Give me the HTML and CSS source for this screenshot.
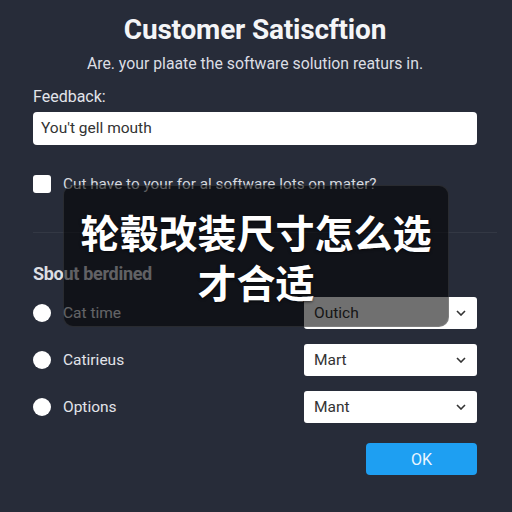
FILE: index.html
```html
<!DOCTYPE html>
<html lang="en">

<head>
    <meta charset="UTF-8">
    <meta name="viewport" content="width=device-width, initial-scale=1.0">
    <title>Customer Satisfaction</title>
    <link rel="stylesheet" href="styles.css">
</head>

<body>
    <div class="survey">
        <h1>Customer Satiscftion</h1>
        <p class="subtitle">Are. your plaate the software solution reaturs in.</p>

        <label class="field-label" for="feedback">Feedback:</label>
        <div class="text-input" id="feedback">You't gell mouth</div>

        <div class="check-row">
            <span class="checkbox"></span>
            <span class="check-text">Cut have to your for al software lots on mater?</span>
        </div>

        <div class="divider"></div>

        <h2>Sbout berdined</h2>

        <div class="option-list">
            <div class="option-row">
                <div class="option-label">
                    <span class="radio"></span>
                    <span>Cat time</span>
                </div>
                <div class="select">
                    <span>Outich</span>
                    <svg class="chevron" viewBox="0 0 10 6" width="10" height="6">
                        <path d="M1 1 L5 5 L9 1" fill="none" stroke="#333" stroke-width="1.6" />
                    </svg>
                </div>
            </div>
            <div class="option-row">
                <div class="option-label">
                    <span class="radio"></span>
                    <span>Catirieus</span>
                </div>
                <div class="select">
                    <span>Mart</span>
                    <svg class="chevron" viewBox="0 0 10 6" width="10" height="6">
                        <path d="M1 1 L5 5 L9 1" fill="none" stroke="#333" stroke-width="1.6" />
                    </svg>
                </div>
            </div>
            <div class="option-row">
                <div class="option-label">
                    <span class="radio"></span>
                    <span>Options</span>
                </div>
                <div class="select">
                    <span>Mant</span>
                    <svg class="chevron" viewBox="0 0 10 6" width="10" height="6">
                        <path d="M1 1 L5 5 L9 1" fill="none" stroke="#333" stroke-width="1.6" />
                    </svg>
                </div>
            </div>
        </div>

        <div class="actions">
            <button type="button">OK</button>
        </div>
    </div>

    <!-- caption over the form -->
    <div class="caption">
        <p>轮毂改装尺寸怎么选<br>才合适</p>
    </div>
</body>

</html>
```

FILE: styles.css
```css
body {
    font-family: 'Roboto', 'Noto Sans', sans-serif;
    background: #272c39;
    margin: 0;
    padding: 0;
    width: 512px;
    height: 512px;
    overflow: hidden;
    position: relative;
    color: #e6e8ed;
}

.survey {
    padding: 14px 35px 0 33px;
}

h1 {
    margin: 0;
    font-size: 28px;
    line-height: 32px;
    font-weight: 700;
    color: #f4f5f7;
    text-align: center;
    letter-spacing: -0.2px;
}

.subtitle {
    margin: 8px 0 0;
    font-size: 15.8px;
    line-height: 20px;
    color: #dcdee4;
    text-align: center;
}

.field-label {
    display: block;
    margin-top: 13px;
    font-size: 16px;
    line-height: 20px;
    color: #e2e4ea;
}

.text-input {
    margin-top: 5px;
    height: 33px;
    box-sizing: border-box;
    padding: 0 8px;
    background: #fff;
    border-radius: 4px;
    font-size: 15.5px;
    line-height: 33px;
    color: #333;
}

.check-row {
    display: flex;
    align-items: center;
    gap: 12px;
    margin-top: 29px;
    height: 20px;
}

.checkbox {
    width: 18px;
    height: 18px;
    background: #fff;
    border-radius: 3px;
}

.check-text {
    font-size: 15.3px;
    color: #d6d9df;
}

.divider {
    margin: 38px -20px 0 0;
    height: 1px;
    background: rgba(255, 255, 255, 0.06);
}

h2 {
    margin: 31px 0 0;
    font-size: 18px;
    line-height: 20px;
    font-weight: 700;
    color: #dcdee3;
    letter-spacing: -0.3px;
}

.option-list {
    display: flex;
    flex-direction: column;
    gap: 15px;
    margin-top: 13px;
}

.option-row {
    display: flex;
    justify-content: space-between;
    align-items: center;
    height: 32px;
}

.option-label {
    display: flex;
    align-items: center;
    gap: 12px;
    font-size: 15.5px;
    color: #e2e4ea;
}

.radio {
    width: 18px;
    height: 18px;
    border-radius: 50%;
    background: #fff;
}

.select {
    width: 173px;
    height: 32px;
    box-sizing: border-box;
    padding: 0 11px 0 10px;
    background: #fff;
    border-radius: 3px;
    display: flex;
    justify-content: space-between;
    align-items: center;
    font-size: 15.5px;
    color: #333;
}

.actions {
    display: flex;
    justify-content: flex-end;
    margin-top: 20px;
}

button {
    width: 111px;
    height: 32px;
    background: #1e9ff2;
    color: #eaf6ff;
    border: none;
    border-radius: 4px;
    font-family: 'Roboto', sans-serif;
    font-size: 16px;
}

.caption {
    position: absolute;
    left: 63px;
    top: 185px;
    width: 386px;
    height: 142px;
    box-sizing: border-box;
    background: rgba(0, 0, 0, 0.56);
    border: 1px solid rgba(255, 255, 255, 0.1);
    border-radius: 10px;
    display: flex;
    justify-content: center;
    align-items: center;
}

.caption p {
    margin: 0;
    font-family: 'Noto Sans CJK SC', sans-serif;
    font-size: 39px;
    line-height: 50px;
    font-weight: 700;
    color: #fff;
    text-align: center;
    text-shadow: 0 1px 3px rgba(0, 0, 0, 0.6);
}
```
